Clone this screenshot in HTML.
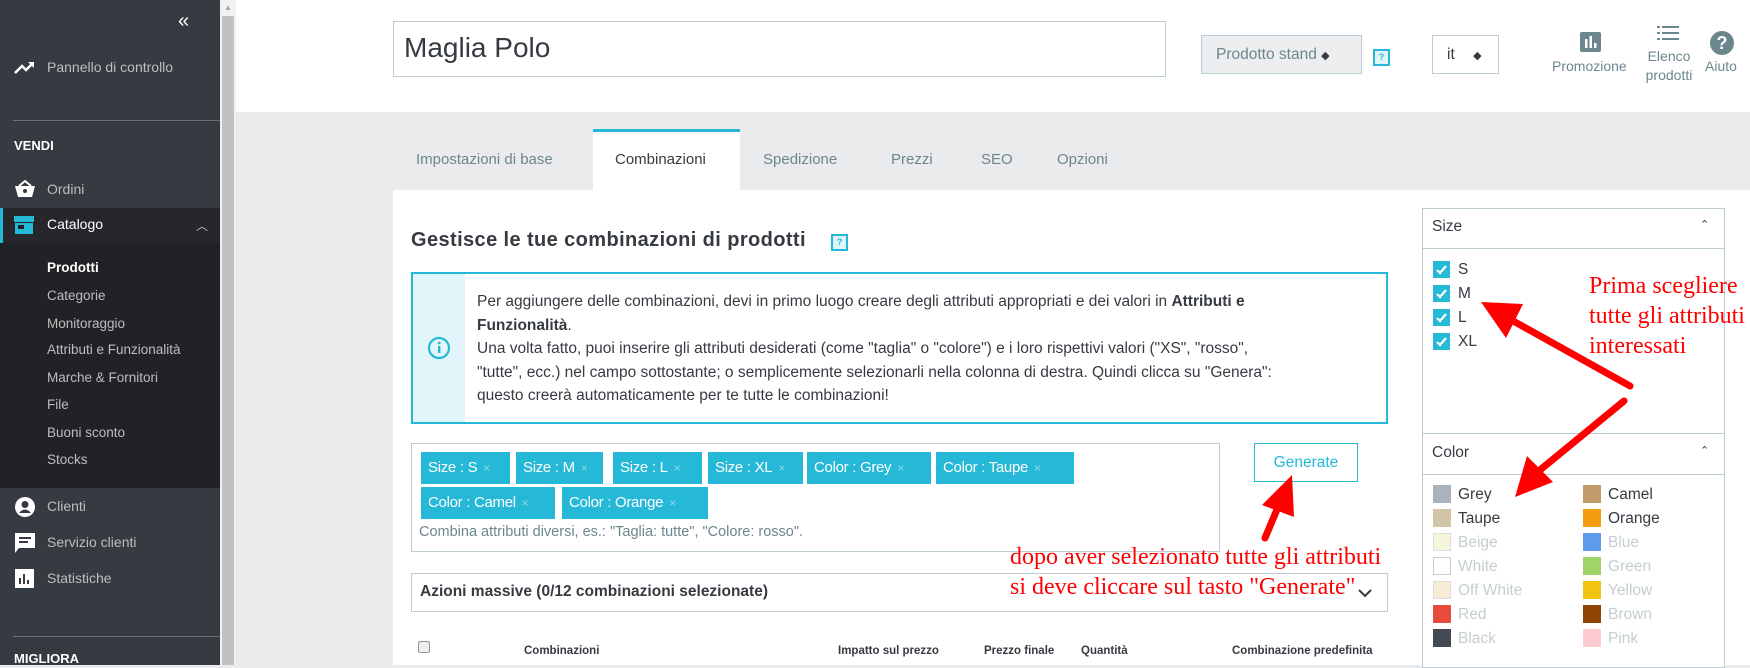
<!DOCTYPE html>
<html><head><meta charset="utf-8">
<style>
*{box-sizing:border-box;margin:0;padding:0}
body{width:1750px;height:665px;overflow:hidden;position:relative;font-family:"Liberation Sans",sans-serif;background:#eaebed;color:#363a41}
.abs{position:absolute}
#side{left:0;top:0;width:220px;height:665px;background:#363a41;color:#bebebe;font-size:14px}
#side .it{position:absolute;left:47px;white-space:nowrap}
#side .sub{position:absolute;left:47px;font-size:13.5px;color:#bebebe}
.sep{position:absolute;left:13px;width:207px;height:1px;background:#6c7278}
#scroll{left:220px;top:0;width:16px;height:665px;background:#f1f1f1}
#head{left:236px;top:0;width:1514px;height:112px;background:#fff}
.tab{position:absolute;top:129px;height:61px;line-height:62px;font-size:15px;color:#6c868e}
#panel{left:393px;top:190px;width:1357px;height:475px;background:#fff}
.tag{position:absolute;height:32px;background:#25b9d7;color:#fff;font-size:15px;line-height:32px;padding-left:7px;letter-spacing:-0.3px}
.tag span{color:#8fd7e8;font-size:12px;margin-left:6px}
.th{position:absolute;top:645px;font-size:11.5px;font-weight:bold;color:#363a41}
.box{position:absolute;border:1px solid #bbcdd2;background:#fff}
.cb{position:absolute;width:17px;height:17px;background:#25b9d7}
.sw{position:absolute;width:18px;height:18px}
.cl{position:absolute;font-size:15.5px}
.red{position:absolute;font-family:"Liberation Serif",serif;color:#f00;white-space:nowrap}
</style></head><body>
<div id="side" class="abs">
 <div class="abs" style="left:178px;top:10px;color:#fff;font-size:20px;letter-spacing:-3px">«</div>
 <svg class="abs" style="left:14px;top:61px" width="22" height="14" viewBox="0 0 22 14"><path d="M1 12 L8 5 L12 9 L19 2" stroke="#fff" stroke-width="2.5" fill="none"/><path d="M14 1 H20 V7" fill="#fff"/></svg>
 <div class="it" style="top:59px">Pannello di controllo</div>
 <div class="sep" style="top:120px"></div>
 <div class="it" style="left:14px;top:138px;color:#fff;font-weight:bold;font-size:13px">VENDI</div>
 <svg class="abs" style="left:14px;top:180px" width="22" height="18" viewBox="0 0 22 18"><path d="M1 6 H21 L18 17 H4 Z" fill="#fff"/><path d="M5 6 L11 1 L17 6" stroke="#fff" stroke-width="2" fill="none"/><circle cx="11" cy="11" r="2" fill="#363a41"/></svg>
 <div class="it" style="top:181px">Ordini</div>
 <div class="abs" style="left:0;top:208px;width:220px;height:280px;background:#202226"></div>
 <div class="abs" style="left:0;top:208px;width:220px;height:35px;background:#25272b;border-left:3px solid #25b9d7"></div>
 <svg class="abs" style="left:14px;top:216px" width="20" height="18" viewBox="0 0 20 18"><rect x="0" y="0" width="20" height="6" fill="#25b9d7"/><rect x="1" y="7" width="18" height="11" fill="#25b9d7"/><rect x="4" y="9" width="6" height="4" fill="#202226"/></svg>
 <div class="it" style="top:216px;color:#fff">Catalogo</div>
 <div class="abs" style="left:196px;top:217px;color:#bebebe;font-size:12px">︿</div>
 <div class="sub" style="top:260px;color:#fff;font-weight:bold">Prodotti</div>
 <div class="sub" style="top:288px">Categorie</div>
 <div class="sub" style="top:316px">Monitoraggio</div>
 <div class="sub" style="top:342px">Attributi e Funzionalità</div>
 <div class="sub" style="top:370px">Marche &amp; Fornitori</div>
 <div class="sub" style="top:397px">File</div>
 <div class="sub" style="top:425px">Buoni sconto</div>
 <div class="sub" style="top:452px">Stocks</div>
 <svg class="abs" style="left:15px;top:497px" width="20" height="20"><circle cx="10" cy="10" r="10" fill="#fff"/><circle cx="10" cy="7.5" r="3.5" fill="#363a41"/><path d="M4 16 Q10 9 16 16" fill="#363a41"/></svg>
 <div class="it" style="top:498px">Clienti</div>
 <svg class="abs" style="left:15px;top:533px" width="20" height="20"><path d="M0 0 H20 V15 H4 L0 20Z" fill="#fff"/><rect x="4" y="4" width="12" height="2" fill="#363a41"/><rect x="4" y="8" width="9" height="2" fill="#363a41"/></svg>
 <div class="it" style="top:534px">Servizio clienti</div>
 <svg class="abs" style="left:15px;top:569px" width="19" height="19"><rect width="19" height="19" fill="#fff"/><rect x="4" y="9" width="2" height="6" fill="#363a41"/><rect x="8" y="5" width="2" height="10" fill="#363a41"/><rect x="12" y="11" width="2" height="4" fill="#363a41"/></svg>
 <div class="it" style="top:570px">Statistiche</div>
 <div class="sep" style="top:636px"></div>
 <div class="it" style="left:14px;top:651px;color:#fff;font-weight:bold;font-size:13px">MIGLIORA</div>
</div>
<div id="scroll" class="abs"><div class="abs" style="left:2px;top:16px;width:12px;height:649px;background:#c1c1c1"></div><div class="abs" style="left:4px;top:3px;color:#a0a0a0;font-size:8px">▲</div></div>
<div id="head" class="abs"></div>
<div class="box" style="left:393px;top:21px;width:773px;height:56px;padding-left:10px;font-size:28px;line-height:52px">Maglia Polo</div>
<div class="box" style="left:1201px;top:35px;width:161px;height:39px;background:#eceeef;color:#6c868e;font-size:15.5px;line-height:37px;padding-left:14px">Prodotto stand <span style="color:#363a41;font-size:11px">◆</span></div>
<div class="abs" style="left:1373px;top:49px;width:17px;height:17px;border:2px solid #25b9d7;background:#dff5f9;color:#25b9d7;font-size:9px;text-align:center;line-height:13px;font-weight:bold">?</div>
<div class="box" style="left:1432px;top:35px;width:67px;height:39px;font-size:15.5px;line-height:37px;padding-left:14px">it <span style="margin-left:14px;font-size:11px">◆</span></div>
<svg class="abs" style="left:1580px;top:32px" width="21" height="20"><rect width="21" height="20" rx="2" fill="#6c868e"/><rect x="5" y="7" width="2.5" height="9" fill="#fff"/><rect x="9.5" y="4" width="2.5" height="12" fill="#fff"/><rect x="14" y="11" width="2.5" height="5" fill="#fff"/></svg>
<div class="abs" style="left:1552px;top:58px;font-size:14px;color:#6c868e">Promozione</div>
<svg class="abs" style="left:1657px;top:26px" width="22" height="14"><g fill="#6c868e"><rect x="0" y="0" width="3" height="2"/><rect x="5" y="0" width="17" height="2"/><rect x="0" y="6" width="3" height="2"/><rect x="5" y="6" width="17" height="2"/><rect x="0" y="12" width="3" height="2"/><rect x="5" y="12" width="17" height="2"/></g></svg>
<div class="abs" style="left:1642px;top:47px;font-size:14px;color:#6c868e;text-align:center;width:54px;line-height:19px">Elenco prodotti</div>
<div class="abs" style="left:1710px;top:31px;width:24px;height:24px;border-radius:50%;background:#6c868e;color:#fff;font-weight:bold;font-size:18px;text-align:center;line-height:24px">?</div>
<div class="abs" style="left:1705px;top:58px;font-size:14px;color:#6c868e">Aiuto</div>

<div class="tab" style="left:416px">Impostazioni di base</div>
<div class="abs" style="left:593px;top:129px;width:147px;height:62px;background:#fff;border-top:3px solid #25b9d7"></div>
<div class="tab" style="left:615px;color:#363a41">Combinazioni</div>
<div class="tab" style="left:763px">Spedizione</div>
<div class="tab" style="left:891px">Prezzi</div>
<div class="tab" style="left:981px">SEO</div>
<div class="tab" style="left:1057px">Opzioni</div>

<div id="panel" class="abs"></div>
<div class="abs" style="left:411px;top:229px;font-size:20px;font-weight:bold;letter-spacing:0.4px">Gestisce le tue combinazioni di prodotti</div>
<div class="abs" style="left:831px;top:234px;width:17px;height:17px;border:2px solid #25b9d7;background:#dff5f9;color:#25b9d7;font-size:9px;text-align:center;line-height:13px;font-weight:bold">?</div>
<div class="abs" style="left:411px;top:272px;width:977px;height:152px;border:2px solid #25b9d7;background:#fff"></div>
<div class="abs" style="left:413px;top:274px;width:52px;height:148px;background:#e2f5fa"></div>
<svg class="abs" style="left:427px;top:336px" width="24" height="24"><circle cx="12" cy="12" r="10" stroke="#25b9d7" stroke-width="2.2" fill="none"/><rect x="11" y="10" width="2.4" height="7" fill="#25b9d7"/><circle cx="12.2" cy="7" r="1.4" fill="#25b9d7"/></svg>
<div class="abs" style="left:477px;top:290px;font-size:15.5px;line-height:23.6px;color:#363a41;white-space:nowrap">Per aggiungere delle combinazioni, devi in primo luogo creare degli attributi appropriati e dei valori in <b>Attributi e</b><br><b>Funzionalità</b>.<br>Una volta fatto, puoi inserire gli attributi desiderati (come "taglia" o "colore") e i loro rispettivi valori ("XS", "rosso",<br>"tutte", ecc.) nel campo sottostante; o semplicemente selezionarli nella colonna di destra. Quindi clicca su "Genera":<br>questo creerà automaticamente per te tutte le combinazioni!</div>

<div class="box" style="left:411px;top:443px;width:809px;height:109px"></div>
<div class="tag" style="left:421px;top:452px;width:89px">Size : S<span>×</span></div>
<div class="tag" style="left:516px;top:452px;width:87px">Size : M<span>×</span></div>
<div class="tag" style="left:613px;top:452px;width:89px">Size : L<span>×</span></div>
<div class="tag" style="left:708px;top:452px;width:95px">Size : XL<span>×</span></div>
<div class="tag" style="left:807px;top:452px;width:124px">Color : Grey<span>×</span></div>
<div class="tag" style="left:936px;top:452px;width:138px">Color : Taupe<span>×</span></div>
<div class="tag" style="left:421px;top:487px;width:134px">Color : Camel<span>×</span></div>
<div class="tag" style="left:562px;top:487px;width:146px">Color : Orange<span>×</span></div>
<div class="abs" style="left:419px;top:524px;font-size:14.5px;color:#6c868e">Combina attributi diversi, es.: "Taglia: tutte", "Colore: rosso".</div>
<div class="abs" style="left:1254px;top:443px;width:104px;height:39px;border:1px solid #25b9d7;color:#25b9d7;font-size:15.5px;text-align:center;line-height:37px">Generate</div>

<div class="box" style="left:411px;top:573px;width:977px;height:39px"></div>
<div class="abs" style="left:420px;top:583px;font-size:15.5px;font-weight:bold">Azioni massive (0/12 combinazioni selezionate)</div>
<svg class="abs" style="left:1358px;top:588px" width="14" height="10"><path d="M1 2 L7 8 L13 2" stroke="#363a41" stroke-width="2" fill="none"/></svg>

<div class="abs" style="left:418px;top:641px;width:12px;height:12px;border:1px solid #999;border-radius:2px;background:#eee"></div>
<div class="th" style="left:524px">Combinazioni</div>
<div class="th" style="left:838px">Impatto sul prezzo</div>
<div class="th" style="left:984px">Prezzo finale</div>
<div class="th" style="left:1081px">Quantità</div>
<div class="th" style="left:1232px">Combinazione predefinita</div>

<div class="box" style="left:1422px;top:208px;width:303px;height:460px"></div>
<div class="abs" style="left:1422px;top:248px;width:303px;height:1px;background:#bbcdd2"></div>
<div class="abs" style="left:1432px;top:218px;font-size:15.5px">Size</div>
<div class="abs" style="left:1700px;top:218px;font-size:11px">⌃</div>
<div class="cb" style="left:1433px;top:261px"></div><div class="cl" style="left:1458px;top:261px">S</div>
<div class="cb" style="left:1433px;top:285px"></div><div class="cl" style="left:1458px;top:285px">M</div>
<div class="cb" style="left:1433px;top:309px"></div><div class="cl" style="left:1458px;top:309px">L</div>
<div class="cb" style="left:1433px;top:333px"></div><div class="cl" style="left:1458px;top:333px">XL</div>
<svg class="abs" style="left:1433px;top:261px" width="17" height="90"><g stroke="#fff" stroke-width="2.2" fill="none"><path d="M4 9 L7 12 L13 5"/><path d="M4 33 L7 36 L13 29"/><path d="M4 57 L7 60 L13 53"/><path d="M4 81 L7 84 L13 77"/></g></svg>
<div class="abs" style="left:1422px;top:433px;width:303px;height:1px;background:#bbcdd2"></div>
<div class="abs" style="left:1422px;top:474px;width:303px;height:1px;background:#bbcdd2"></div>
<div class="abs" style="left:1432px;top:444px;font-size:15.5px">Color</div>
<div class="abs" style="left:1700px;top:444px;font-size:11px">⌃</div>

<div class="sw" style="left:1433px;top:485px;background:#aab2bd"></div><div class="cl" style="left:1458px;top:486px">Grey</div>
<div class="sw" style="left:1433px;top:509px;background:#d2c5a7"></div><div class="cl" style="left:1458px;top:510px">Taupe</div>
<div class="sw" style="left:1433px;top:533px;background:#f5f5dc;border:1px solid #ddd"></div><div class="cl" style="left:1458px;top:534px;color:#c5ced1">Beige</div>
<div class="sw" style="left:1433px;top:557px;background:#fff;border:1px solid #ccc"></div><div class="cl" style="left:1458px;top:558px;color:#c5ced1">White</div>
<div class="sw" style="left:1433px;top:581px;background:#faebd7;border:1px solid #ddd"></div><div class="cl" style="left:1458px;top:582px;color:#c5ced1">Off White</div>
<div class="sw" style="left:1433px;top:605px;background:#e84c3d"></div><div class="cl" style="left:1458px;top:606px;color:#c5ced1">Red</div>
<div class="sw" style="left:1433px;top:629px;background:#434a54"></div><div class="cl" style="left:1458px;top:630px;color:#c5ced1">Black</div>
<div class="sw" style="left:1583px;top:485px;background:#c19a6b"></div><div class="cl" style="left:1608px;top:486px">Camel</div>
<div class="sw" style="left:1583px;top:509px;background:#f39d12"></div><div class="cl" style="left:1608px;top:510px">Orange</div>
<div class="sw" style="left:1583px;top:533px;background:#5d9cec"></div><div class="cl" style="left:1608px;top:534px;color:#c5ced1">Blue</div>
<div class="sw" style="left:1583px;top:557px;background:#a0d468"></div><div class="cl" style="left:1608px;top:558px;color:#c5ced1">Green</div>
<div class="sw" style="left:1583px;top:581px;background:#f1c40f"></div><div class="cl" style="left:1608px;top:582px;color:#c5ced1">Yellow</div>
<div class="sw" style="left:1583px;top:605px;background:#8f4300"></div><div class="cl" style="left:1608px;top:606px;color:#c5ced1">Brown</div>
<div class="sw" style="left:1583px;top:629px;background:#fcccd0"></div><div class="cl" style="left:1608px;top:630px;color:#c5ced1">Pink</div>

<div class="red" style="left:1589px;top:271px;font-size:24px;line-height:30px">Prima scegliere<br>tutte gli attributi<br>interessati</div>
<div class="red" style="left:1010px;top:542px;font-size:24px;line-height:30px">dopo aver selezionato tutte gli attributi<br>si deve cliccare sul tasto "Generate"</div>
<svg class="abs" style="left:0;top:0" width="1750" height="665">
<g stroke="#f00" stroke-width="7" stroke-linecap="round">
<line x1="1630" y1="386" x2="1515" y2="322"/>
<line x1="1624" y1="401" x2="1540" y2="470"/>
<line x1="1265" y1="538" x2="1281" y2="500"/>
</g>
<g fill="#f00">
<polygon points="1481,302 1523,304 1506,338"/>
<polygon points="1515,497 1527,456 1553,482"/>
<polygon points="1292,475 1294,517 1262,505"/>
</g>
</svg>
</body></html>
